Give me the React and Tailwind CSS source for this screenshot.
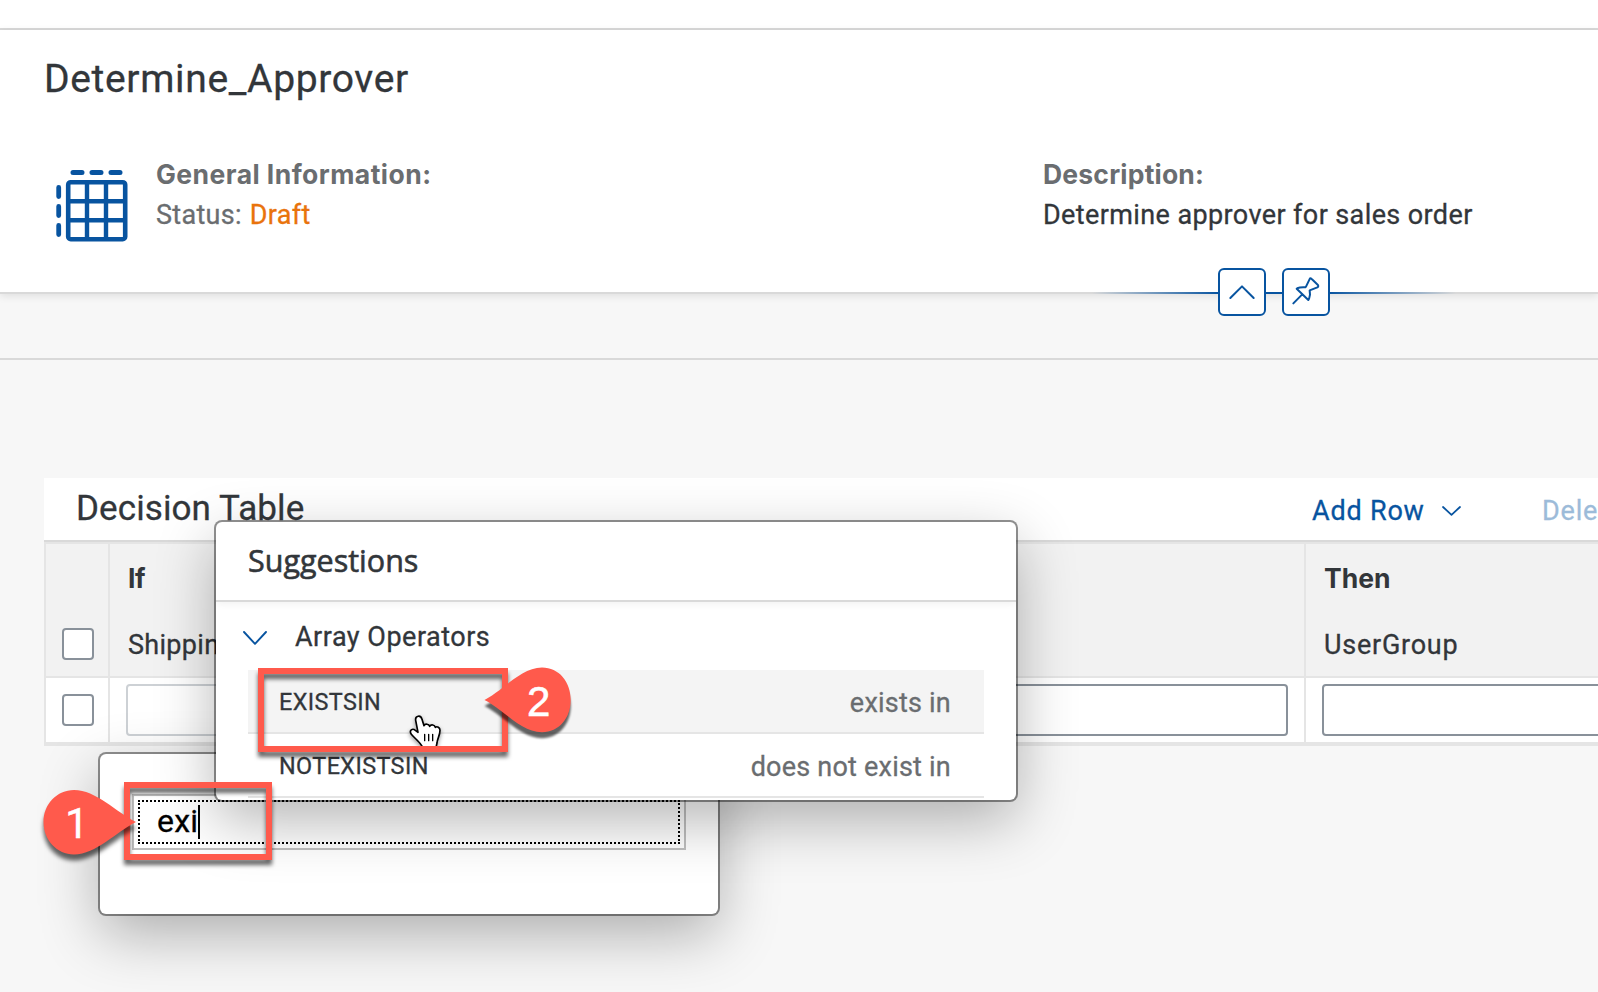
import React from "react";

function TableGridIcon() {
  return (
    <svg width="72" height="72" viewBox="0 0 72 72" className="shrink-0" fill="none" stroke="#0854a0">
      <path d="M17 2.6H26 M36 2.6H45 M55 2.6H64" strokeWidth="5" strokeLinecap="round" />
      <path d="M2.7 17.5V26.5 M2.7 36.5V45.5 M2.7 55.5V64.5" strokeWidth="4.8" strokeLinecap="round" />
      <rect x="12.2" y="12.2" width="57" height="57" rx="2.5" strokeWidth="4.6" />
      <path d="M31 12V69 M50 12V69 M12 31.2H69 M12 50.2H69" strokeWidth="4.4" />
    </svg>
  );
}

function Chevron({ className, w, h, stroke }) {
  return (
    <svg width={w} height={h} viewBox={`0 0 ${w} ${h}`} className={className} fill="none" stroke="#0854a0" strokeWidth={stroke} strokeLinecap="round" strokeLinejoin="round">
      <path d={`M1 1L${w / 2} ${h - 1.2}L${w - 1} 1`} />
    </svg>
  );
}

function HeaderButton({ children }) {
  return (
    <div className="h-12 w-12 rounded-[6px] border-2 border-[#0854a0] bg-white">
      <svg viewBox="6 6 132 132" className="h-11 w-11" fill="none" stroke="#0854a0" strokeWidth="6" strokeLinecap="round" strokeLinejoin="round">
        {children}
      </svg>
    </div>
  );
}

function Checkbox() {
  return <div className="h-8 w-8 rounded-[4px] border-2 border-[#89919a] bg-white" />;
}

function Suggestion({ name, hint, active }) {
  return (
    <div className={`flex h-16 items-center justify-between border-b-2 border-[#e5e5e5] pl-[31px] pr-[33px] ${active ? "bg-[#f4f4f4]" : "bg-white"}`}>
      <span className="mt-[3px] text-[23.4px] leading-[59px] tracking-[0.4px] text-[#32363a]">{name}</span>
      <span className="mt-[5px] text-[27px] leading-[57px] tracking-[0.22px] text-[#6a6d70]">{hint}</span>
    </div>
  );
}

function HandCursor() {
  return (
    <svg width="37" height="33" viewBox="40 40 111 99" className="absolute left-[408px] top-[713px] drop-shadow-[0_2px_2px_rgba(0,0,0,0.4)]" strokeLinejoin="round" strokeLinecap="round">
      <path
        d="M70 98L63 62C61 47 79 45 82 59L88 78C91 71 103 73 105 80C109 73 120 75 122 83C127 79 136 83 136 92C136 108 128 116 127 130L124 144H84C80 130 60 116 50 104C42 91 54 85 62 92Z"
        fill="#fff" stroke="#000" strokeWidth="5"
      />
      <path d="M90 104V123 M102 104V123 M114 104V123" stroke="#000" strokeWidth="4" />
    </svg>
  );
}

export default function App() {
  return (
    <div className="relative h-[992px] w-full overflow-hidden bg-[#f7f7f7] font-['Roboto',sans-serif] text-[#32363a] [-webkit-text-stroke:0.3px_currentColor]">
      <div className="h-[30px] border-b-2 border-[#d9d9d9] bg-white" />

      <header className="relative h-[264px] border-b-2 border-[#d9d9d9] bg-white pt-[25px] shadow-[0_2px_8px_rgba(0,0,0,0.1)]">
        <h1 className="pl-[44px] text-[39px] leading-[48px] tracking-[0.66px]">Determine_Approver</h1>
        <div className="mt-[51px] flex">
          <div className="flex w-[1043px] shrink-0 pl-[56px]">
            <div className="pt-4"><TableGridIcon /></div>
            <div className="pl-[28px]">
              <div className="font-['Inter',sans-serif] text-[26.5px] font-bold leading-[40px] tracking-[0.45px] text-[#6a6d70] [-webkit-text-stroke:0px]">General Information:</div>
              <div className="mt-px text-[27px] leading-[40px] tracking-[0.3px] text-[#6a6d70]">
                Status: <span className="ml-px text-[#e9730c]">Draft</span>
              </div>
            </div>
          </div>
          <div>
            <div className="font-['Inter',sans-serif] text-[26.5px] font-bold leading-[40px] tracking-[0.2px] text-[#6a6d70] [-webkit-text-stroke:0px]">Description:</div>
            <div className="mt-px text-[27px] leading-[40px] tracking-[0.39px]">Determine approver for sales order</div>
          </div>
        </div>
        <div className="absolute left-[1092px] top-[238px] flex h-12 w-[364px] items-center justify-center">
          <div className="mt-[2px] h-[2px] flex-1 bg-gradient-to-r from-transparent to-[#0854a0]" />
          <HeaderButton><path d="M37 90L72 55L107 90" /></HeaderButton>
          <div className="mt-[2px] h-[2px] w-4 bg-[#0854a0]" />
          <HeaderButton>
            <path d="M84 31C86 30 88 32 90 34L107 50C110 54 109 56 106 58L83 67L84 80C83 86 81 94 79 96L44 62C45 60 60 56 70 58L72 56Z M60 80L34 106" />
          </HeaderButton>
          <div className="mt-[2px] h-[2px] flex-1 bg-gradient-to-l from-transparent to-[#0854a0]" />
        </div>
      </header>

      <div className="h-[66px] border-b-2 border-[#d9d9d9]" />

      <section className="ml-[44px] mt-[118px]">
        <div className="flex h-[64px] overflow-hidden border-b-2 border-[#d9d9d9] bg-white">
          <h2 className="w-[1268px] shrink-0 pl-[32px] pt-px text-[35px] leading-[60px] tracking-[0.1px]">Decision Table</h2>
          <div className="flex shrink-0 pt-[3px] text-[27px] leading-[60px] tracking-[0.8px] text-[#0854a0]">
            <span className="w-[114px] whitespace-nowrap">Add Row</span>
            <Chevron w={19} h={10} stroke={1.8} className="ml-[16px] mt-[25px]" />
          </div>
          <span className="ml-[81px] shrink-0 pt-[3px] text-[27px] leading-[60px] tracking-[0.8px] text-[#9cbbd9]">Dele</span>
        </div>

        <div className="flex h-[204px] overflow-hidden border-b-4 border-l-2 border-t-2 border-[#e5e5e5]">
          <div className="w-[64px] shrink-0 border-r-2 border-[#e5e5e5]">
            <div className="flex h-[134px] items-end border-b-2 border-[#e5e5e5] bg-[#f2f2f2] pb-4 pl-4"><Checkbox /></div>
            <div className="h-[64px] bg-white pl-4 pt-4"><Checkbox /></div>
          </div>
          <div className="w-[1196px] shrink-0 border-r-2 border-[#e5e5e5]">
            <div className="h-[134px] border-b-2 border-[#e5e5e5] bg-[#f2f2f2] pl-[18px] pt-[14px]">
              <div className="font-['Inter',sans-serif] text-[26.5px] font-bold leading-[40px] tracking-[-0.5px] [-webkit-text-stroke:0px]">If</div>
              <div className="mt-[27px] text-[27px] leading-[40px] tracking-[0.3px]">ShippingPoint</div>
            </div>
            <div className="flex h-[64px] gap-[18px] bg-white px-4 py-[6px]">
              <div className="h-[52px] w-[560px] rounded-[4px] border-2 border-[#cdd1d5]" />
              <div className="h-[52px] flex-1 rounded-[4px] border-2 border-[#89919a]" />
            </div>
          </div>
          <div className="min-w-0 flex-1">
            <div className="h-[134px] border-b-2 border-[#e5e5e5] bg-[#f2f2f2] pl-[18px] pt-[14px]">
              <div className="font-['Inter',sans-serif] text-[26.5px] font-bold leading-[40px] [-webkit-text-stroke:0px]">Then</div>
              <div className="mt-[27px] text-[27px] leading-[40px] tracking-[0.75px]">UserGroup</div>
            </div>
            <div className="h-[64px] overflow-hidden bg-white pl-4 pt-[6px]">
              <div className="h-[52px] w-[400px] rounded-[4px] border-2 border-[#89919a]" />
            </div>
          </div>
        </div>
      </section>

      <div className="absolute left-[100px] top-[754px] h-[160px] w-[618px] rounded-[6px] bg-white px-8 pt-[40px] shadow-[0_0_0_2px_rgba(0,0,0,0.42),0_20px_60px_rgba(0,0,0,0.3)]">
        <div className="h-[56px] w-[554px] border-2 border-[#bfbfbf]" />
      </div>

      <div className="absolute left-[216px] top-[522px] h-[278px] w-[800px] overflow-hidden rounded-[6px] bg-white">
        <div className="relative h-[80px] border-b-2 border-[#d9d9d9] pl-[32px] font-['Open_Sans',sans-serif] text-[30.5px] leading-[76px] shadow-[0_2px_8px_rgba(0,0,0,0.06)] [-webkit-text-stroke:0.6px_currentColor]">Suggestions</div>
        <div className="flex h-[68px] pl-[27px]">
          <Chevron w={24} h={14} stroke={1.9} className="mt-[29px]" />
          <span className="pl-[28px] text-[27px] leading-[71px] tracking-[0.5px]">Array Operators</span>
        </div>
        <div className="px-8">
          <Suggestion name="EXISTSIN" hint="exists in" active />
          <Suggestion name="NOTEXISTSIN" hint="does not exist in" />
        </div>
      </div>
      <div className="pointer-events-none absolute left-[216px] top-[522px] h-[278px] w-[800px] rounded-[6px] shadow-[0_0_0_2px_rgba(0,0,0,0.42),0_20px_60px_rgba(0,0,0,0.3)]" />

      <div className="absolute left-[138px] top-[800px] h-[44px] w-[542px] border-2 border-dotted border-black pl-[17px]">
        <div className="flex items-center">
          <span className="text-[32px] leading-[38px] tracking-[0.2px] text-black">exi</span>
          <span className="mt-[2px] h-[34px] w-[2px] bg-black" />
        </div>
      </div>

      <HandCursor />

      <div className="absolute left-[124px] top-[782px] h-[78px] w-[148px] border-[6px] border-[#ff5a4c] drop-shadow-[0_5px_2px_rgba(0,0,0,0.6)]" />
      <div className="absolute left-[258px] top-[668px] h-[84px] w-[250px] border-[6px] border-[#ff5a4c] drop-shadow-[0_5px_2px_rgba(0,0,0,0.6)]" />

      <div className="absolute left-[43px] top-[789px] h-[66px] w-[94px]">
        <svg width="94" height="66" viewBox="43 789 94 66" className="absolute left-0 top-0 overflow-visible drop-shadow-[0_6px_2px_rgba(0,0,0,0.6)]">
          <path d="M136 822C116 812 96 790 74 790C57 790 43.5 804 43.5 822C43.5 840 57 854.5 74 854.5C96 854.5 116 832 136 822Z" fill="#ff5a4c" />
        </svg>
        <span className="relative block pl-[22px] text-[42px] leading-[70px] text-white">1</span>
      </div>
      <div className="absolute left-[484px] top-[667px] h-[66px] w-[87px]">
        <svg width="87" height="66" viewBox="484 667 87 66" className="absolute left-0 top-0 overflow-visible drop-shadow-[0_6px_1px_rgba(0,0,0,0.6)]">
          <path d="M484.5 700C504 690 521 667.6 542 667.6C559 667.6 570.7 682 570.7 700C570.7 718 559 732.2 542 732.2C521 732.2 504 710 484.5 700Z" fill="#ff5a4c" />
        </svg>
        <span className="relative block pl-[43px] font-['Liberation_Sans',sans-serif] text-[42px] leading-[70px] text-white [-webkit-text-stroke:0.6px_white]">2</span>
      </div>
    </div>
  );
}
